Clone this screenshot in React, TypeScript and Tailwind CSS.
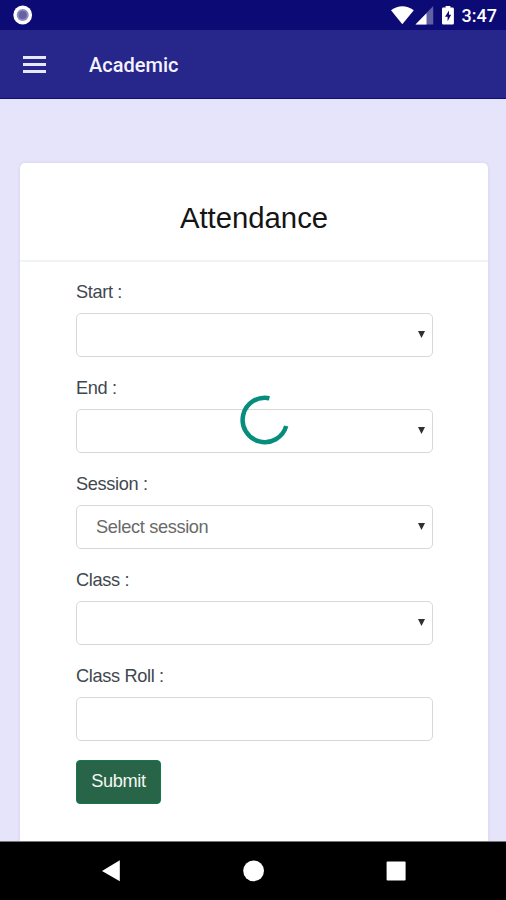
type Field = {
  id: string;
  label: string;
  value?: string;
  select?: boolean;
};

const fields: Field[] = [
  { id: "start", label: "Start :", select: true },
  { id: "end", label: "End :", select: true },
  { id: "session", label: "Session :", value: "Select session", select: true },
  { id: "class", label: "Class :", select: true },
  { id: "roll", label: "Class Roll :" },
];

const StatusBar = () => (
  <div className="flex h-[30px] shrink-0 items-center justify-between bg-[#0c0b76] pr-[9px] pl-[13px]">
    <svg className="size-5" viewBox="0 0 20 20">
      <circle cx="9.7" cy="10" r="9.4" fill="#fff" />
      <circle cx="9.7" cy="10" r="6" fill="#8e8ac4" />
      <circle cx="9.7" cy="10" r="4" fill="#66619f" />
    </svg>

    <div className="flex items-center">
      {/* Wifi, signal, battery */}
      <svg className="h-5 w-[66px]" viewBox="0 0 66 20" fill="#fff">
        <path d="M0 5.2Q11.3-2.8 22.8 5.2L11.3 19.3Z" />
        <path d="M42.2 1V19.5H24.5Z" opacity=".35" />
        <path d="M35.5 8.2V19.5H24.5Z" />
        <path d="M54.6 1H59.4V2.6H61.4Q62.9 2.6 62.9 4V18.2Q62.9 19.5 61.6 19.5H52.3Q51 19.5 51 18.2V4Q51 2.6 52.3 2.6H54.6Z" />
        <path d="M58 5.5L54 11.8H56.6V16.2L60.2 9.8H58Z" fill="#0c0b76" />
      </svg>
      <span className="mt-0.5 ml-[5px] font-[Roboto] text-[18px] leading-5 font-medium text-white">
        3:47
      </span>
    </div>
  </div>
);

const AppBar = () => (
  <header className="flex h-[69px] shrink-0 items-center border-b border-[#100d78] bg-[#27268b] pl-[23px]">
    <button aria-label="Menu" className="flex w-[23px] flex-col gap-1">
      <span className="h-[3px] bg-[#e8e6fb]" />
      <span className="h-[3px] bg-[#e8e6fb]" />
      <span className="h-[3px] bg-[#e8e6fb]" />
    </button>
    <h1 className="ml-[43px] pt-0.5 font-[Roboto] text-[20px] font-medium text-[#f4f3ff]">
      Academic
    </h1>
  </header>
);

const FormField = ({ field }: { field: Field }) => (
  <div className="mb-[17px]">
    <label
      htmlFor={field.id}
      className="mb-[7px] block pt-px text-[18.2px] leading-[27px] tracking-[-0.35px] text-[#3f484f]"
    >
      {field.label}
    </label>
    <div
      id={field.id}
      className="flex h-11 items-center justify-between rounded-[5px] border-[1.5px] border-[#d8d8d8] bg-white pr-[7px] pb-0.5 pl-[19px]"
    >
      <span className="pt-[3px] text-[18.2px] tracking-[-0.35px] text-[#6a6a6a]">
        {field.value}
      </span>
      {field.select && (
        <svg className="h-[7px] w-[7px]" viewBox="0 0 7 7" fill="#303030">
          <path d="M0 0H7L3.5 7Z" />
        </svg>
      )}
    </div>
  </div>
);

const NavBar = () => (
  <nav className="h-[59px] shrink-0 border-t border-[#777] bg-black">
    <svg className="h-[58px] w-full" viewBox="0 0 506 58" fill="#fff">
      <path d="M102 29L119.8 18.3V39.3Z" />
      <circle cx="253.6" cy="28.8" r="10.4" />
      <rect x="386.6" y="19.5" width="19" height="19" rx="1" />
    </svg>
  </nav>
);

const App = () => {
  return (
    <div className="flex h-screen w-full flex-col overflow-hidden bg-[#e6e4fa] font-['Liberation_Sans',Arial,sans-serif]">
      <StatusBar />
      <AppBar />

      <main className="relative min-h-0 flex-1 overflow-hidden pt-16 pr-[18px] pl-5">
        <section className="h-full rounded-t-[5px] bg-white shadow-[0_0_3px_rgba(80,70,140,0.15)]">
          <div className="flex h-[99px] items-center justify-center border-b-2 border-[#f2f3f5] pt-3">
            <h2 className="text-[29.3px] text-[#151515]">Attendance</h2>
          </div>

          <form className="pt-4 pr-[55px] pl-14">
            {fields.map((field) => (
              <FormField key={field.id} field={field} />
            ))}
            <button
              type="button"
              className="mt-0.5 h-11 w-[85px] rounded-[4px] border-[1.5px] border-[#11794c] bg-[#286447] text-[18.2px] tracking-[-0.35px] text-[#f4f8f2]"
            >
              Submit
            </button>
          </form>
        </section>

        {/* Loading spinner */}
        <svg
          className="absolute top-[296px] left-[238.5px] size-[50px]"
          viewBox="0 0 50 50"
          fill="none"
          stroke="#078d7b"
          strokeWidth="4.5"
        >
          <path d="M30.4 3.2A22.2 22.2 0 1 0 47.2 31" />
        </svg>
      </main>

      <NavBar />
    </div>
  );
};

export default App;
